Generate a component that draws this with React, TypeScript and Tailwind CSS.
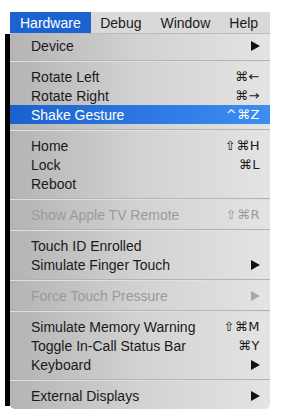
type Item =
  | { kind: 'sep' }
  | { kind: 'item'; label: string; keys?: string; sub?: boolean; disabled?: boolean; active?: boolean }

const items: Item[] = [
  { kind: 'item', label: 'Device', sub: true },
  { kind: 'sep' },
  { kind: 'item', label: 'Rotate Left', keys: '⌘←' },
  { kind: 'item', label: 'Rotate Right', keys: '⌘→' },
  { kind: 'item', label: 'Shake Gesture', keys: '^⌘Z', active: true },
  { kind: 'sep' },
  { kind: 'item', label: 'Home', keys: '⇧⌘H' },
  { kind: 'item', label: 'Lock', keys: '⌘L' },
  { kind: 'item', label: 'Reboot' },
  { kind: 'sep' },
  { kind: 'item', label: 'Show Apple TV Remote', keys: '⇧⌘R', disabled: true },
  { kind: 'sep' },
  { kind: 'item', label: 'Touch ID Enrolled' },
  { kind: 'item', label: 'Simulate Finger Touch', sub: true },
  { kind: 'sep' },
  { kind: 'item', label: 'Force Touch Pressure', sub: true, disabled: true },
  { kind: 'sep' },
  { kind: 'item', label: 'Simulate Memory Warning', keys: '⇧⌘M' },
  { kind: 'item', label: 'Toggle In-Call Status Bar', keys: '⌘Y' },
  { kind: 'item', label: 'Keyboard', sub: true },
  { kind: 'sep' },
  { kind: 'item', label: 'External Displays', sub: true },
]

const menus = ['Hardware', 'Debug', 'Window', 'Help']

function Triangle({ color }: { color: string }) {
  return (
    <svg width="9" height="10" viewBox="0 0 9 10" aria-hidden>
      <polygon points="0,0 9,5 0,10" fill={color} />
    </svg>
  )
}

export default function App() {
  return (
    <div
      className="flex h-[418px] w-[281px] bg-white pt-3 text-[14px] leading-none"
      style={{ fontFamily: '"Liberation Sans", "DejaVu Sans", sans-serif' }}
    >
      {/* window edge behind the menu */}
      <div className="flex w-[10px] flex-col">
        <div className="h-[22px]" />
        <div className="ml-[5px] h-[372px] w-[5px] bg-black" />
      </div>

      <div className="flex w-[260px] flex-col">
        <div className="flex h-[22px] items-center border-b border-[#bcbcbc] bg-[#d9d9d9]">
          {menus.map((m, i) => (
            <span
              key={m}
              className={
                i === 0
                  ? 'flex h-full items-center bg-[#1c63d1] px-[10px] text-white'
                  : 'flex h-full items-center px-[9.5px] text-[#1a1a1a]'
              }
            >
              {m}
            </span>
          ))}
        </div>

        <div className="rounded-b-[5px] bg-gradient-to-r from-[#b4b4b4] via-[#d2d2d2] to-[#e4e4e4] pb-1 pt-[2px]">
          {items.map((it, i) => {
            if (it.kind === 'sep') {
              return (
                <div key={i} className="flex h-3 items-center">
                  <div className="h-[2px] w-full border-b border-t border-b-[#e0e0e0] border-t-[#b3b3b3]" />
                </div>
              )
            }
            const color = it.active ? 'text-white' : it.disabled ? 'text-[#9a9a9a]' : 'text-[#1a1a1a]'
            return (
              <div
                key={i}
                className={`flex h-[19px] items-center justify-between pl-[21px] pr-[10px] ${color} ${
                  it.active ? 'bg-gradient-to-r from-[#1b61ce] to-[#3d8ef2]' : ''
                }`}
              >
                <span>{it.label}</span>
                {it.keys && (
                  <span className="font-['DejaVu_Sans',sans-serif] text-[13px] tracking-[0.5px]">{it.keys}</span>
                )}
                {it.sub && <Triangle color={it.disabled ? '#a8a8a8' : '#111'} />}
              </div>
            )
          })}
        </div>
      </div>
    </div>
  )
}
